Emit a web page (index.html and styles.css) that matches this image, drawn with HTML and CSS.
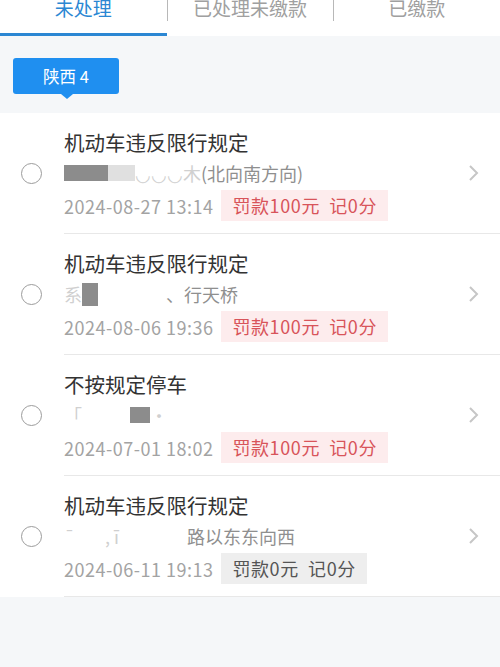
FILE: index.html
```html
<!DOCTYPE html>
<html lang="zh-CN">
<head>
<meta charset="utf-8">
<link rel="stylesheet" href="styles.css">
</head>
<body>
<div class="tabs">
  <div class="tab active"><span>未处理</span></div>
  <div class="tab"><span>已处理未缴款</span></div>
  <div class="tab"><span>已缴款</span></div>
</div>
<div class="tagbar">
  <div class="tag">陕西 4</div>
</div>
<div class="list">
  <div class="item">
    <div class="radio"><span class="circle"></span></div>
    <div class="body">
      <div class="content">
        <div class="title">机动车违反限行规定</div>
        <div class="addr"><span class="blk dark w44"></span><span class="blk light w27"></span><span class="faint">◡◡◡木</span>(北向南方向)</div>
        <div class="meta"><span class="date">2024-08-27 13:14</span><span class="badge red">罚款100元&nbsp;&nbsp;记0分</span></div>
      </div>
      <svg class="chev" width="12" height="18" viewBox="0 0 12 18"><path d="M2 2l7 7-7 7" fill="none" stroke="#c6c6c6" stroke-width="2"/></svg>
    </div>
  </div>
  <div class="item">
    <div class="radio"><span class="circle"></span></div>
    <div class="body">
      <div class="content">
        <div class="title">机动车违反限行规定</div>
        <div class="addr"><span class="faint">系</span><span class="blk dark w16 tall"></span><span class="gap68"></span>、行天桥</div>
        <div class="meta"><span class="date">2024-08-06 19:36</span><span class="badge red">罚款100元&nbsp;&nbsp;记0分</span></div>
      </div>
      <svg class="chev" width="12" height="18" viewBox="0 0 12 18"><path d="M2 2l7 7-7 7" fill="none" stroke="#c6c6c6" stroke-width="2"/></svg>
    </div>
  </div>
  <div class="item">
    <div class="radio"><span class="circle"></span></div>
    <div class="body">
      <div class="content">
        <div class="title">不按规定停车</div>
        <div class="addr"><span class="faint">「</span><span class="gap48"></span><span class="blk dark w20"></span><span class="faint">·</span></div>
        <div class="meta"><span class="date">2024-07-01 18:02</span><span class="badge red">罚款100元&nbsp;&nbsp;记0分</span></div>
      </div>
      <svg class="chev" width="12" height="18" viewBox="0 0 12 18"><path d="M2 2l7 7-7 7" fill="none" stroke="#c6c6c6" stroke-width="2"/></svg>
    </div>
  </div>
  <div class="item">
    <div class="radio"><span class="circle"></span></div>
    <div class="body">
      <div class="content">
        <div class="title">机动车违反限行规定</div>
        <div class="addr"><span class="faint">¯</span><span class="gap30"></span><span class="faint">, ī</span><span class="gap68"></span>路以东东向西</div>
        <div class="meta"><span class="date">2024-06-11 19:13</span><span class="badge grey">罚款0元&nbsp;&nbsp;记0分</span></div>
      </div>
      <svg class="chev" width="12" height="18" viewBox="0 0 12 18"><path d="M2 2l7 7-7 7" fill="none" stroke="#c6c6c6" stroke-width="2"/></svg>
    </div>
  </div>
</div>
</body>
</html>
```
FILE: styles.css
```css
* { box-sizing: border-box; }
html, body { margin: 0; padding: 0; }
body {
  width: 500px;
  height: 667px;
  overflow: hidden;
  background: #f5f7f9;
  font-family: "Noto Sans CJK SC", "Noto Sans", sans-serif;
}
.tabs {
  display: flex;
  height: 36px;
  background: #fff;
}
.tab {
  flex: 1;
  position: relative;
  text-align: center;
  font-size: 19px;
  line-height: 20px;
  color: #a0a0a0;
  border-bottom: 3px solid transparent;
}
.tab span { display: block; margin-top: -2px; }
.tab.active { color: #2b87d3; border-bottom-color: #2b87d3; }
.tab + .tab::before {
  content: "";
  position: absolute;
  left: 0;
  top: 0;
  width: 1px;
  height: 21px;
  background: #b8b8b8;
}
.tagbar {
  padding: 22px 0 19px 13px;
}
.tag {
  position: relative;
  width: 106px;
  height: 36px;
  background: #1f8ff0;
  border-radius: 3px;
  color: #fff;
  font-size: 16.5px;
  line-height: 36px;
  text-align: center;
}
.tag::after {
  content: "";
  position: absolute;
  left: 48px;
  bottom: -5px;
  border-left: 6px solid transparent;
  border-right: 6px solid transparent;
  border-top: 5px solid #1f8ff0;
}
.list { background: #fff; }
.item { display: flex; }
.radio {
  width: 64px;
  flex: none;
  padding-top: 50px;
  padding-left: 21px;
}
.circle {
  display: block;
  width: 21px;
  height: 21px;
  border: 1.5px solid #9c9c9c;
  border-radius: 50%;
}
.body {
  flex: 1;
  display: flex;
  align-items: flex-start;
  border-bottom: 1px solid #e8e8e8;
}
.content {
  flex: 1;
  padding: 15px 0 12px;
}
.title {
  font-size: 20.5px;
  line-height: 28px;
  color: #333;
}
.addr {
  display: flex;
  align-items: center;
  height: 34px;
  font-size: 18px;
  color: #8f8f8f;
  white-space: nowrap;
}
.blk { display: inline-block; height: 16px; filter: blur(0.6px); }
.blk.tall { height: 23px; }
.dark { background: #8c8c8c; }
.light { background: #e0e0e0; }
.w44 { width: 44px; }
.w27 { width: 27px; }
.w16 { width: 16px; }
.w20 { width: 20px; }
.gap68 { display: inline-block; width: 68px; }
.gap48 { display: inline-block; width: 48px; }
.gap30 { display: inline-block; width: 30px; }
.faint { color: #d0d0d0; }
.meta {
  display: flex;
  align-items: center;
  height: 31px;
}
.date {
  font-size: 18px;
  letter-spacing: 0.5px;
  color: #a3a3a3;
  margin-right: 8px;
}
.badge {
  height: 31px;
  line-height: 31px;
  padding: 0 11px;
  font-size: 18px;
  letter-spacing: 0.6px;
}
.badge.red { background: #fdeced; color: #d8545a; }
.badge.grey { background: #eeeeee; color: #555; }
.chev {
  flex: none;
  margin: 51px 20px 0 0;
}
```
